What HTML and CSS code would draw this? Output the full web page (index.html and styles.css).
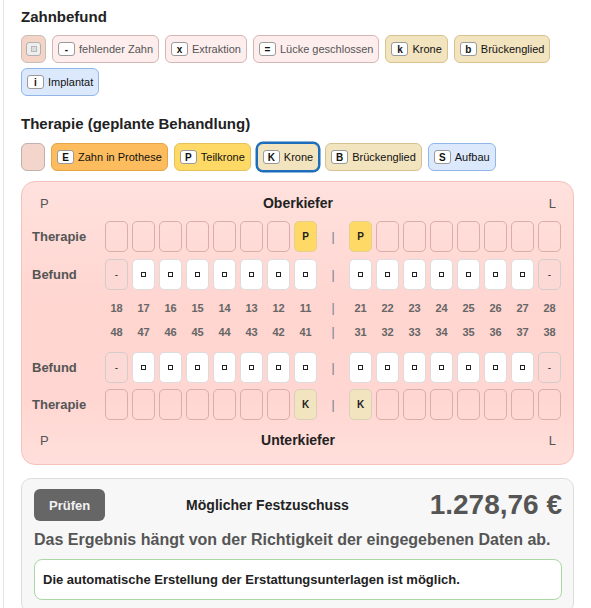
FILE: index.html
```html
<!DOCTYPE html>
<html lang="de">
<head>
<meta charset="utf-8">
<title>Zahnbefund und Therapie</title>
<link rel="stylesheet" href="styles.css">
</head>
<body>
<div class="page">

  <h2 class="section-title">Zahnbefund</h2>
  <div class="chips">
    <span class="chip chip-intact"><span class="key key-muted"><span class="sq sq-muted"></span></span></span>
    <span class="chip chip-find"><span class="key">-</span>fehlender Zahn</span>
    <span class="chip chip-find"><span class="key">x</span>Extraktion</span>
    <span class="chip chip-find"><span class="key">=</span>Lücke geschlossen</span>
    <span class="chip chip-beige"><span class="key">k</span>Krone</span>
    <span class="chip chip-beige"><span class="key">b</span>Brückenglied</span>
    <span class="chip chip-blue"><span class="key">i</span>Implantat</span>
  </div>

  <h2 class="section-title section-title-2">Therapie (geplante Behandlung)</h2>
  <div class="chips">
    <span class="chip chip-empty"></span>
    <span class="chip chip-orange"><span class="key">E</span>Zahn in Prothese</span>
    <span class="chip chip-yellow"><span class="key">P</span>Teilkrone</span>
    <span class="chip chip-beige chip-selected"><span class="key">K</span>Krone</span>
    <span class="chip chip-beige"><span class="key">B</span>Brückenglied</span>
    <span class="chip chip-blue"><span class="key">S</span>Aufbau</span>
  </div>

  <section class="chart">
    <div class="jaw-head">
      <span class="side">P</span>
      <strong class="jaw-name">Oberkiefer</strong>
      <span class="side side-r">L</span>
    </div>

    <div class="teeth-row row-first">
      <span class="row-label">Therapie</span>
      <span class="cell"></span><span class="cell"></span><span class="cell"></span><span class="cell"></span>
      <span class="cell"></span><span class="cell"></span><span class="cell"></span><span class="cell cell-p">P</span>
      <span class="sep">|</span>
      <span class="cell cell-p">P</span><span class="cell"></span><span class="cell"></span><span class="cell"></span>
      <span class="cell"></span><span class="cell"></span><span class="cell"></span><span class="cell"></span>
    </div>

    <div class="teeth-row row-gap">
      <span class="row-label">Befund</span>
      <span class="cell cell-missing">-</span>
      <span class="cell cell-tooth"><span class="sq"></span></span><span class="cell cell-tooth"><span class="sq"></span></span>
      <span class="cell cell-tooth"><span class="sq"></span></span><span class="cell cell-tooth"><span class="sq"></span></span>
      <span class="cell cell-tooth"><span class="sq"></span></span><span class="cell cell-tooth"><span class="sq"></span></span>
      <span class="cell cell-tooth"><span class="sq"></span></span>
      <span class="sep">|</span>
      <span class="cell cell-tooth"><span class="sq"></span></span><span class="cell cell-tooth"><span class="sq"></span></span>
      <span class="cell cell-tooth"><span class="sq"></span></span><span class="cell cell-tooth"><span class="sq"></span></span>
      <span class="cell cell-tooth"><span class="sq"></span></span><span class="cell cell-tooth"><span class="sq"></span></span>
      <span class="cell cell-tooth"><span class="sq"></span></span>
      <span class="cell cell-missing">-</span>
    </div>

    <div class="teeth-row num-row num-row-1">
      <span class="row-label"></span>
      <span class="num">18</span><span class="num">17</span><span class="num">16</span><span class="num">15</span>
      <span class="num">14</span><span class="num">13</span><span class="num">12</span><span class="num">11</span>
      <span class="sep">|</span>
      <span class="num">21</span><span class="num">22</span><span class="num">23</span><span class="num">24</span>
      <span class="num">25</span><span class="num">26</span><span class="num">27</span><span class="num">28</span>
    </div>

    <div class="teeth-row num-row num-row-2">
      <span class="row-label"></span>
      <span class="num">48</span><span class="num">47</span><span class="num">46</span><span class="num">45</span>
      <span class="num">44</span><span class="num">43</span><span class="num">42</span><span class="num">41</span>
      <span class="sep">|</span>
      <span class="num">31</span><span class="num">32</span><span class="num">33</span><span class="num">34</span>
      <span class="num">35</span><span class="num">36</span><span class="num">37</span><span class="num">38</span>
    </div>

    <div class="teeth-row row-lower">
      <span class="row-label">Befund</span>
      <span class="cell cell-missing">-</span>
      <span class="cell cell-tooth"><span class="sq"></span></span><span class="cell cell-tooth"><span class="sq"></span></span>
      <span class="cell cell-tooth"><span class="sq"></span></span><span class="cell cell-tooth"><span class="sq"></span></span>
      <span class="cell cell-tooth"><span class="sq"></span></span><span class="cell cell-tooth"><span class="sq"></span></span>
      <span class="cell cell-tooth"><span class="sq"></span></span>
      <span class="sep">|</span>
      <span class="cell cell-tooth"><span class="sq"></span></span><span class="cell cell-tooth"><span class="sq"></span></span>
      <span class="cell cell-tooth"><span class="sq"></span></span><span class="cell cell-tooth"><span class="sq"></span></span>
      <span class="cell cell-tooth"><span class="sq"></span></span><span class="cell cell-tooth"><span class="sq"></span></span>
      <span class="cell cell-tooth"><span class="sq"></span></span>
      <span class="cell cell-missing">-</span>
    </div>

    <div class="teeth-row row-last">
      <span class="row-label">Therapie</span>
      <span class="cell"></span><span class="cell"></span><span class="cell"></span><span class="cell"></span>
      <span class="cell"></span><span class="cell"></span><span class="cell"></span><span class="cell cell-k">K</span>
      <span class="sep">|</span>
      <span class="cell cell-k">K</span><span class="cell"></span><span class="cell"></span><span class="cell"></span>
      <span class="cell"></span><span class="cell"></span><span class="cell"></span><span class="cell"></span>
    </div>

    <div class="jaw-head jaw-foot">
      <span class="side">P</span>
      <strong class="jaw-name">Unterkiefer</strong>
      <span class="side side-r">L</span>
    </div>
  </section>

  <section class="result">
    <div class="result-top">
      <button class="check-btn" type="button">Prüfen</button>
      <span class="result-label">Möglicher Festzuschuss</span>
      <span class="result-amount">1.278,76 €</span>
    </div>
    <p class="result-note">Das Ergebnis hängt von der Richtigkeit der eingegebenen Daten ab.</p>
    <div class="result-ok">Die automatische Erstellung der Erstattungsunterlagen ist möglich.</div>
  </section>

</div>
</body>
</html>
```

FILE: styles.css
```css
html, body {
  margin: 0;
  padding: 0;
  background: #ffffff;
}

body {
  font-family: "Liberation Sans", Arial, sans-serif;
  color: #222;
  overflow: hidden;
}

.page {
  margin-left: 3px;
  border-left: 1px solid #e6e6e6;
  padding: 8px 17px 20px 17px;
  min-height: 100vh;
}

/* ---------- headings & legend chips ---------- */

.section-title {
  margin: 0 0 9px;
  font-size: 15px;
  line-height: 18px;
  font-weight: bold;
  color: #222;
}

.section-title-2 {
  margin-top: 19px;
  margin-bottom: 10px;
}

.chips {
  display: flex;
  flex-wrap: wrap;
  gap: 5px 6px;
}

.chip {
  box-sizing: border-box;
  display: inline-flex;
  align-items: center;
  gap: 4px;
  height: 28px;
  padding: 0 5px;
  border: 1px solid #ccc;
  border-radius: 6px;
  font-size: 11px;
  color: #111;
  white-space: nowrap;
}

.key {
  box-sizing: border-box;
  display: inline-flex;
  align-items: center;
  justify-content: center;
  width: 17px;
  height: 14px;
  background: #fff;
  border: 1px solid #9a9a9a;
  border-radius: 3px;
  font-size: 10px;
  font-weight: bold;
  color: #111;
}

.chip-intact {
  width: 25px;
  padding: 0 4px;
  background: #f4d4c7;
  border-color: #c9bdb8;
}

.key-muted {
  width: 15px;
  background: #eeeeee;
  border-color: #b0b0b0;
}

.sq {
  display: block;
  width: 3px;
  height: 3px;
  border: 1px solid #222;
  background: #fff;
}

.sq-muted {
  width: 4px;
  height: 4px;
  border-color: #b8b8b8;
  background: #dddddd;
}

.chip-find {
  background: #fdeeed;
  border-color: #d6b5b5;
  color: #555;
}

.chip-beige {
  background: #f3e4c0;
  border-color: #d8c290;
}

.chip-blue {
  background: #dce9fd;
  border-color: #90b6ea;
}

.chip-empty {
  width: 24px;
  background: #f4d5cb;
  border-color: #bfb2ad;
}

.chip-orange {
  background: #fdbd5e;
  border-color: #e4a448;
}

.chip-yellow {
  background: #ffd966;
  border-color: #e4c25a;
}

/* active therapy tool: blue ring around the chip */
.chip-selected {
  border-color: #1d6dbd;
  box-shadow: 0 0 0 1.5px #1d6dbd;
}

/* ---------- tooth chart ---------- */

.chart {
  margin-top: 10px;
  padding: 11px 12px 14px 10px;
  border: 1px solid #f4c2bc;
  border-radius: 14px;
  background: linear-gradient(#ffe1dd 0%, #ffd5d0 45%, #ffd6d1 75%, #ffdfdb 100%);
}

.jaw-head {
  display: grid;
  grid-template-columns: 1fr auto 1fr;
  align-items: center;
  height: 20px;
  padding: 0 5px 0 8px;
}

.jaw-foot {
  margin-top: 10px;
}

.side {
  font-size: 13px;
  color: #555;
}

.side-r {
  justify-self: end;
}

.jaw-name {
  font-size: 14px;
  font-weight: bold;
  color: #222;
}

.teeth-row {
  display: grid;
  grid-template-columns: 69px repeat(8, 23px) 24px repeat(8, 23px);
  column-gap: 4px;
  align-items: center;
}

.row-first { margin-top: 8px; }
.row-gap { margin-top: 7px; }
.num-row-1 { margin-top: 7px; }
.num-row-2 { margin-top: 2px; }
.row-lower { margin-top: 9px; }
.row-last { margin-top: 6px; }

.row-label {
  font-size: 13px;
  font-weight: bold;
  color: #555;
}

.cell {
  box-sizing: border-box;
  display: flex;
  align-items: center;
  justify-content: center;
  height: 31px;
  border: 1px solid #d9aea8;
  border-radius: 5px;
  font-size: 10px;
  font-weight: bold;
  color: #222;
}

.cell-p {
  background: #ffd966;
  border-color: #e6d08e;
}

.cell-k {
  background: #f3e4c0;
  border-color: #d9d0b8;
}

.cell-tooth {
  background: #fff;
  border-color: #dcdcdc;
}

.cell-missing {
  background: #fdd9d5;
  border-color: #d4cbcb;
  font-weight: normal;
  color: #333;
}

.sep {
  text-align: center;
  font-size: 12px;
  color: #6b7a90;
}

.num-row {
  height: 22px;
}

.num {
  text-align: center;
  font-size: 11px;
  font-weight: bold;
  color: #666;
}

/* ---------- result box ---------- */

.result {
  margin-top: 13px;
  padding: 10px 11px 12px 12px;
  border: 1px solid #dddddd;
  border-radius: 10px;
  background: #f7f7f7;
}

.result-top {
  display: flex;
  align-items: center;
}

.check-btn {
  height: 32px;
  padding: 0 15px;
  border: 0;
  border-radius: 6px;
  background: #666666;
  color: #f2f2f2;
  font-family: inherit;
  font-size: 13px;
  font-weight: bold;
}

.result-label {
  flex: 1;
  text-align: center;
  font-size: 14px;
  font-weight: bold;
  color: #222;
}

.result-amount {
  font-size: 28px;
  font-weight: bold;
  color: #555;
  line-height: 32px;
}

.result-note {
  margin: 8px 0 0;
  font-size: 16px;
  line-height: 22px;
  font-weight: bold;
  color: #555;
  white-space: nowrap;
}

.result-ok {
  margin-top: 8px;
  padding: 11px 8px;
  border: 1px solid #a9d8a2;
  border-radius: 8px;
  background: #ffffff;
  font-size: 13px;
  line-height: 17px;
  font-weight: bold;
  color: #222;
}
```
